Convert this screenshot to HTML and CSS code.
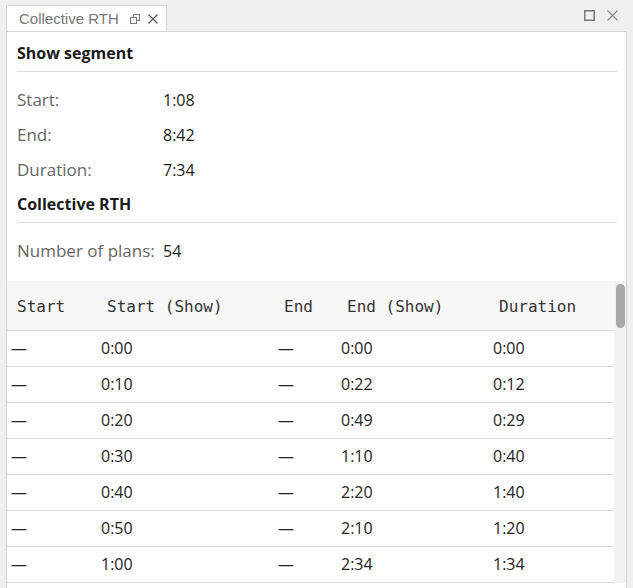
FILE: index.html
```html
<!DOCTYPE html>
<html lang="en">
<head>
    <meta charset="UTF-8">
    <title>Collective RTH</title>
    <link rel="stylesheet" href="styles.css">
</head>
<body>
    <div class="tabbar">
        <div class="tab">
            <span class="tab-title">Collective RTH</span>
            <svg class="tab-icon" width="10" height="10" viewBox="0 0 10 10">
                <rect x="3.5" y="0.5" width="6" height="6" fill="none" stroke="#777"/>
                <rect x="0.5" y="3.5" width="6" height="6" fill="#fff" stroke="#777"/>
            </svg>
            <svg class="tab-icon" width="10" height="10" viewBox="0 0 10 10">
                <path d="M0.5 0.5 L9.5 9.5 M9.5 0.5 L0.5 9.5" stroke="#555" stroke-width="1.2"/>
            </svg>
        </div>
        <div class="bar-icons">
            <svg width="11" height="11" viewBox="0 0 11 11">
                <rect x="0.75" y="0.75" width="9.5" height="9.5" fill="none" stroke="#777" stroke-width="1.5"/>
            </svg>
            <svg width="11" height="11" viewBox="0 0 11 11">
                <path d="M0.5 0.5 L10.5 10.5 M10.5 0.5 L0.5 10.5" stroke="#888" stroke-width="1.1"/>
            </svg>
        </div>
    </div>

    <div class="panel">
        <div class="info">
            <h2 class="section first">Show segment</h2>
            <div class="field"><span class="label">Start:</span><span class="value">1:08</span></div>
            <div class="field"><span class="label">End:</span><span class="value">8:42</span></div>
            <div class="field"><span class="label">Duration:</span><span class="value">7:34</span></div>
            <h2 class="section">Collective RTH</h2>
            <div class="field spaced"><span class="label">Number of plans:</span><span class="value">54</span></div>
        </div>

        <div class="table-wrap">
            <table class="plans">
                <thead>
                    <tr>
                        <th class="c1">Start</th>
                        <th class="c2">Start (Show)</th>
                        <th class="c3">End</th>
                        <th class="c4">End (Show)</th>
                        <th class="c5">Duration</th>
                    </tr>
                </thead>
                <tbody id="rows"></tbody>
            </table>
            <div class="scrollbar"><div class="thumb"></div></div>
        </div>
    </div>

    <script>
        const plans = [
            ['0:00', '0:00', '0:00'],
            ['0:10', '0:22', '0:12'],
            ['0:20', '0:49', '0:29'],
            ['0:30', '1:10', '0:40'],
            ['0:40', '2:20', '1:40'],
            ['0:50', '2:10', '1:20'],
            ['1:00', '2:34', '1:34']
        ];
        const rows = document.getElementById('rows');
        plans.forEach(p => {
            const tr = document.createElement('tr');
            tr.innerHTML = `<td>—</td><td>${p[0]}</td><td>—</td><td>${p[1]}</td><td>${p[2]}</td>`;
            rows.appendChild(tr);
        });
    </script>
</body>
</html>
```

FILE: styles.css
```css
body {
    margin: 0;
    background-color: #f0f0f0;
    font-family: "Open Sans", sans-serif;
    overflow: hidden;
    height: 588px;
}
.tabbar {
    display: flex;
    justify-content: space-between;
    align-items: flex-end;
    height: 31px;
    padding-left: 6px;
    padding-right: 6px;
}
.tab {
    display: flex;
    align-items: center;
    gap: 8px;
    width: 161px;
    height: 26px;
    box-sizing: border-box;
    padding-left: 12px;
    background-color: white;
    border: 1px solid #d4d4d4;
    border-bottom: none;
}
.tab-title {
    font-family: "Liberation Sans", Arial, sans-serif;
    font-size: 15px;
    color: #777;
    margin-right: 3px;
}
.tab-icon {
    display: block;
}
.bar-icons {
    display: flex;
    gap: 12px;
    align-self: flex-start;
    margin-top: 10px;
    margin-right: 9px;
}
.bar-icons svg {
    display: block;
}
.panel {
    margin-left: 6px;
    width: 621px;
    height: 600px;
    box-sizing: border-box;
    background-color: white;
    border: 1px solid #d4d4d4;
}
.info {
    padding: 0 9px 0 10px;
}
.section {
    margin: 0;
    font-size: 16px;
    font-weight: bold;
    line-height: 24px;
    color: #1a1a1a;
    padding: 5px 0 6px;
    border-bottom: 1px solid #dcdcdc;
}
.section.first {
    padding-top: 9px;
    padding-bottom: 6px;
    margin-bottom: 10px;
}
.field {
    display: flex;
    height: 35px;
    align-items: center;
}
.field.spaced {
    margin-top: 10px;
}
.label {
    width: 146px;
    font-size: 17px;
    color: #666;
}
.value {
    font-size: 16px;
    color: #222;
}
.table-wrap {
    display: flex;
    margin-top: 13px;
}
.plans {
    flex: 1;
    border-collapse: collapse;
    table-layout: fixed;
}
.plans th,
.plans td {
    box-sizing: border-box;
}
.plans th {
    height: 49px;
    padding: 2px 0 0 10px;
    text-align: left;
    font-family: "DejaVu Sans Mono", monospace;
    font-size: 16px;
    font-weight: normal;
    color: #333;
    background-color: #f7f7f7;
    border-bottom: 1px solid #dcdcdc;
}
.plans td {
    height: 36px;
    padding: 0 0 0 4px;
    font-size: 16px;
    color: #222;
    border-bottom: 1px solid #dcdcdc;
}
.c1 { width: 90px; }
.c2 { width: 177px; }
.c3 { width: 63px; }
.c4 { width: 152px; }
.scrollbar {
    width: 12px;
    background-color: #f2f2f2;
    padding: 3px 1px 0 2px;
    box-sizing: border-box;
}
.thumb {
    height: 44px;
    border-radius: 5px;
    background-color: #a9a9a9;
}
```
